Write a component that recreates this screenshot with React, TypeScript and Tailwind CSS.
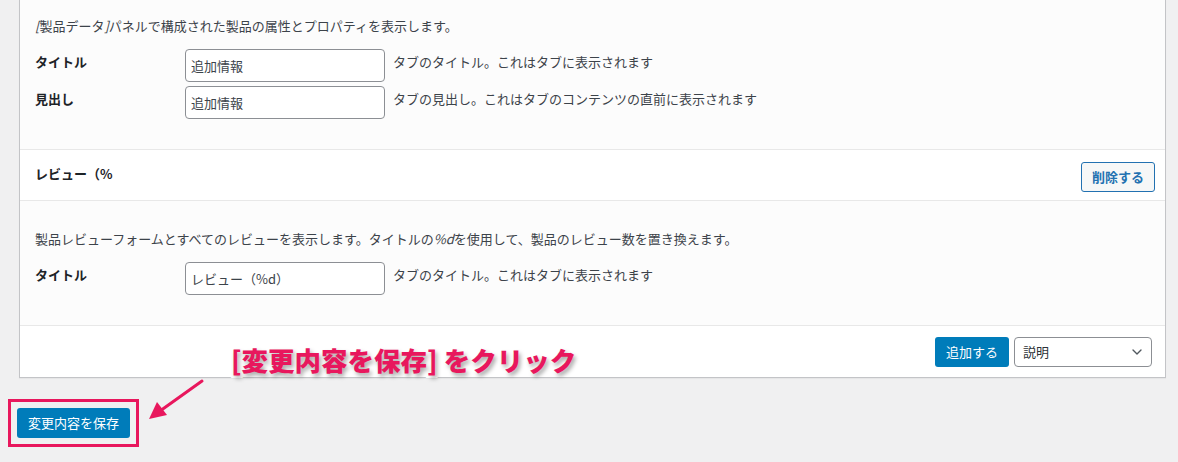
import { ChevronDown } from "lucide-react";

const FONT = "font-['Noto_Sans_CJK_JP','Noto_Sans',sans-serif]";

type Row = { label: string; value: string; help: string };

function FieldRow({ label, value, help }: Row) {
  return (
    <div className="flex items-start">
      <div className="w-[150px] shrink-0 pt-[4px] text-[13px] leading-[18px] font-bold text-[#1d2327]">{label}</div>
      <input
        readOnly
        value={value}
        className="h-[33px] w-[200px] shrink-0 rounded-[4px] border border-[#8c8f94] bg-white px-[5px] text-[13px] text-[#3c434a] outline-none"
      />
      <div className="pl-[8px] pt-[4px] text-[13px] leading-[18px] text-[#3c434a]">{help}</div>
    </div>
  );
}

function Section({ desc, rows, top }: { desc: React.ReactNode; rows: Row[]; top: string }) {
  return (
    <div className={`bg-[#fcfcfc] px-[15px] pb-[30px] ${top}`}>
      <p className="mb-[14px] text-[13px] leading-[18px] text-[#3c434a]">{desc}</p>
      <div className="flex flex-col gap-[4px]">
        {rows.map((r) => (
          <FieldRow key={r.label} {...r} />
        ))}
      </div>
    </div>
  );
}

export default function App() {
  return (
    <div className={`relative h-[462px] w-[1178px] overflow-hidden bg-[#f0f0f1] ${FONT}`}>
      <div className="ml-[19px] w-[1147px] border-x border-b border-[#c3c4c7] bg-white shadow-[0_1px_1px_rgba(0,0,0,0.04)]">
        <Section
          top="pt-[17px]"
          desc={
            <>
              <em>[</em>製品データ<em>]</em>パネルで構成された製品の属性とプロパティを表示します。
            </>
          }
          rows={[
            { label: "タイトル", value: "追加情報", help: "タブのタイトル。これはタブに表示されます" },
            { label: "見出し", value: "追加情報", help: "タブの見出し。これはタブのコンテンツの直前に表示されます" },
          ]}
        />

        <div className="flex h-[52px] items-center justify-between border-y border-[#e8e8e8] bg-white pl-[15px] pr-[10px]">
          <span className="mb-[2px] text-[13px] font-bold text-[#1d2327]">レビュー（%</span>
          <button className="mt-[4px] h-[30px] w-[74px] rounded-[3px] border border-[#2271b1] bg-[#f6f7f7] text-[13px] font-semibold text-[#2271b1]">
            削除する
          </button>
        </div>

        <Section
          top="pt-[29px]"
          desc={
            <>
              製品レビューフォームとすべてのレビューを表示します。タイトルの<em>%d</em>を使用して、製品のレビュー数を置き換えます。
            </>
          }
          rows={[{ label: "タイトル", value: "レビュー（%d）", help: "タブのタイトル。これはタブに表示されます" }]}
        />

        <div className="flex h-[52px] items-center justify-end gap-[5px] border-t border-[#e8e8e8] bg-white pr-[13px]">
          <button className="h-[30px] w-[74px] rounded-[3px] bg-[#007cba] text-[13px] text-white">追加する</button>
          <div className="flex h-[30px] w-[138px] items-center justify-between rounded-[4px] border border-[#8c8f94] bg-white pl-[8px] pr-[6px] text-[13px] text-[#2c3338]">
            <span>説明</span>
            <ChevronDown size={16} strokeWidth={2} className="text-[#50575e]" />
          </div>
        </div>
      </div>

      <div className="ml-[17px] mt-[30px]">
        <button className="h-[30px] w-[113px] rounded-[3px] bg-[#007cba] text-[13px] text-white">変更内容を保存</button>
      </div>

      {/* annotation overlay */}
      <div className="absolute left-[8px] top-[399px] h-[48px] w-[131px] border-[3px] border-[#e8175d]" />
      <div className="absolute left-[231px] top-[342px] text-[26.5px] leading-[36px] font-black whitespace-nowrap text-[#e8175d] [-webkit-text-stroke:5px_#fff] [paint-order:stroke_fill] [text-shadow:2px_3px_4px_rgba(0,0,0,0.35)]">
        [変更内容を保存] をクリック
      </div>
      <svg className="absolute left-0 top-0" width="1178" height="462" viewBox="0 0 1178 462">
        <line x1="202" y1="381" x2="160" y2="411" stroke="#e8175d" strokeWidth="3" strokeLinecap="round" />
        <polygon points="149,419 157,402 167,415" fill="#e8175d" />
      </svg>
    </div>
  );
}
